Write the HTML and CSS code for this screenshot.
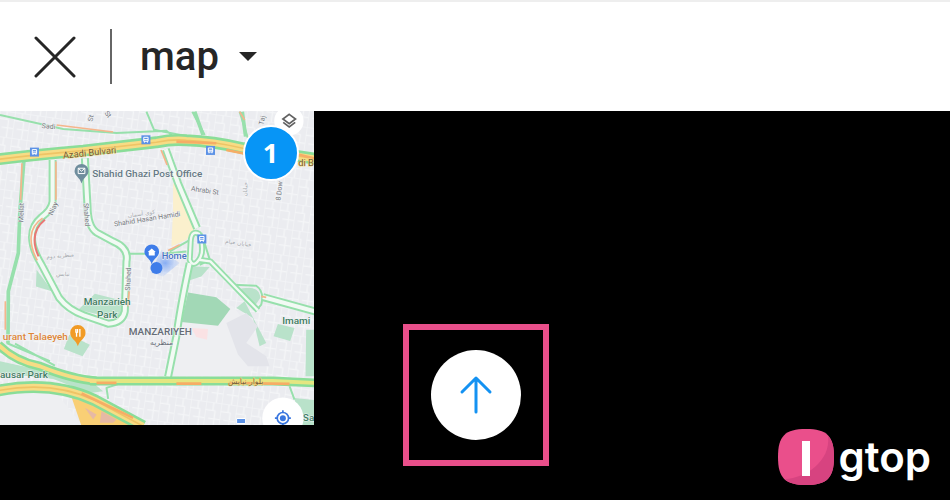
FILE: index.html
```html
<!DOCTYPE html>
<html lang="en">
<head>
    <meta charset="UTF-8">
    <meta name="viewport" content="width=device-width, initial-scale=1.0">
    <title>map</title>
    <link rel="stylesheet" href="styles.css">
</head>
<body>
    <header class="toolbar">
        <button type="button" class="close" aria-label="Close">
            <svg width="42" height="42" viewBox="0 0 42 42"><path d="M2 2L40 40M40 2L2 40"/></svg>
        </button>
        <span class="divider"></span>
        <label class="album">
            <select aria-label="Album">
                <option>map</option>
            </select>
            <svg class="caret" width="18" height="9" viewBox="0 0 18 9"><path d="M0 0H18L9 9Z"/></svg>
        </label>
    </header>

    <main class="gallery">
        <button type="button" class="photo" aria-label="Map screenshot, selected">
            <svg class="map" viewBox="0 3 942 942">
                <defs>
                    <pattern id="blocks" width="46" height="78" patternUnits="userSpaceOnUse" patternTransform="rotate(8)">
                        <path d="M0 0H46M0 25H30M12 50H46M0 0V78M23 0V25M30 25V78"/>
                    </pattern>
                    <radialGradient id="beam"><stop offset="0" stop-color="#5b91f3" stop-opacity=".7"/><stop offset="1" stop-color="#9dbcf8" stop-opacity=".2"/></radialGradient>
                    <path id="azadi" d="M-5 148Q110 134 250 122L470 97Q520 87 560 91Q640 94 730 115Q840 130 945 146"/>
                    <path id="niayesh" d="M270 814H820L945 820"/>
                    <path id="niayesh-west" d="M-5 705Q45 755 120 770Q220 810 290 814"/>
                    <path id="south" d="M-5 843C90 825 190 828 285 872L430 950"/>
                    <g id="roads">
                        <path d="M158 150V275Q155 300 125 322C80 360 92 410 125 465L178 565Q205 600 252 617L325 642Q368 640 375 605L380 455Q388 415 340 395L290 368Q264 350 263 290L255 145"/>
                        <path d="M498 118L535 220L592 355M570 460Q540 600 530 680L505 802"/>
                        <path d="M790 562L950 606"/>
                    </g>
                    <path id="diagonal" d="M598 450L632 455L700 525L775 602"/>
                    <path id="ring" d="M570 450L573 395Q575 360 598 372L605 395Q612 430 598 450Q580 475 570 450Z"/>
                </defs>

                <rect class="land" y="0" width="950" height="950"/>
                <rect fill="url(#blocks)" y="0" width="950" height="950"/>
                <path class="plain" d="M555 560L700 590L800 720L745 800H520ZM0 850L160 840L245 945H0Z"/>

                <!-- parks and districts -->
                <path class="sand" d="M520 220L560 250L590 350L560 390L515 410L520 300Z"/>
                <path class="park" d="M110 480L158 545L108 530ZM285 552L375 575L365 630L235 600ZM208 675L270 705L248 740L192 718ZM575 470L630 472L605 500L568 512ZM710 540Q780 520 782 565L765 590ZM710 595L735 575L800 700L780 710L760 625ZM835 643L885 655L872 694L822 680ZM920 660H950V800H918ZM0 755L70 770L280 820L310 845L270 850L160 808L0 790ZM885 865L950 872V950H900Z"/>
                <path class="park deep" d="M565 548L650 563L692 598L655 648L545 637Z"/>
                <path class="pink" d="M575 655L625 658L622 690L590 682Z"/>
                <path class="shade" d="M680 640L740 610L775 650L740 700L800 740L810 770H745L715 735Z"/>
                <path class="sand-road" d="M215 863L320 895L400 950H245Z"/>
                <path class="rose" d="M255 895L290 915L280 930ZM305 905L350 930L340 940H300Z"/>

                <!-- minor roads -->
                <path class="lane" d="M0 15L190 57L350 69L500 62L525 85M440 5L465 65M465 60L570 80M578 5L615 75M720 5L745 85M385 432H460M490 432L560 425M510 425L575 388M605 370L632 455M600 465L630 450M700 525L770 528Q795 545 785 585L772 600L705 532M20 700L150 755M45 702L165 768M325 868L320 835L380 815M870 830L885 870"/>
                <path class="lane wide" d="M72 150L60 300L55 430L25 545L24 700M585 5L610 75M728 5L738 80"/>
                <path class="jam" d="M170 45L340 66M66 160L62 270M16 575V660M720 5L735 30M505 422L540 405"/>

                <use href="#roads" class="edge"/>
                <use href="#diagonal" class="edge thin"/>
                <use href="#ring" class="edge thin"/>
                <use href="#roads" class="core"/>
                <use href="#diagonal" class="core thin"/>
                <use href="#ring" class="core thin"/>
                <path class="jam" d="M168 155V270M484 120L502 165M384 590L388 545M785 560L800 563"/>
                <path class="jam" d="M128 325C86 352 84 400 112 452"/>
                <path class="red" d="M135 330C97 360 98 400 116 440"/>

                <!-- highways -->
                <use href="#azadi" class="hwy-edge"/>
                <use href="#azadi" class="hwy-mid"/>
                <use href="#azadi" class="hwy-line"/>
                <path class="jam thick" d="M680 120L740 132M890 132L950 147M530 95L650 100"/>
                <use href="#niayesh" class="hwy-edge slim"/>
                <use href="#niayesh-west" class="hwy-edge slim"/>
                <use href="#niayesh" class="hwy-core slim"/>
                <use href="#niayesh-west" class="hwy-mid slim"/>
                <use href="#south" class="hwy-edge"/>
                <use href="#south" class="hwy-mid"/>
                <use href="#south" class="hwy-line"/>
                <path class="jam thick" d="M290 820H350M530 822H605M690 820L870 823M245 852L400 925"/>

                <!-- transit stops -->
                <g class="stop">
                    <g id="stop"><rect x="90" y="113" width="27" height="27"/><path d="M97 119H110V131H97ZM97 126H110M99 131V135M108 131V135"/></g>
                    <use href="#stop" x="335" y="-37"/>
                    <use href="#stop" x="529" y="-5"/>
                    <use href="#stop" x="503" y="261"/>
                    <path class="bus" d="M711 927H738V942H711Z"/>
                </g>

                <!-- street names -->
                <g class="street">
                    <text x="125" y="54" transform="rotate(5 125 54)">Sadi</text>
                    <text x="70" y="337" transform="rotate(-88 70 337)">Mellat</text>
                    <text x="158" y="318" transform="rotate(-67 158 318)">Niay</text>
                    <text x="251" y="280" transform="rotate(86 251 280)">Shahed</text>
                    <text x="391" y="543" transform="rotate(-88 391 543)">Shahed</text>
                    <text x="278" y="35" transform="rotate(-80 278 35)">St</text>
                    <text x="313" y="10" transform="rotate(50 313 10)">St</text>
                    <text x="792" y="46" transform="rotate(-80 792 46)">Taj</text>
                    <text x="843" y="273" transform="rotate(-84 843 273)">8 Dow</text>
                    <text x="573" y="243" transform="rotate(8 573 243)">Ahrabi St</text>
                    <text x="344" y="350" transform="rotate(-9 344 350)">Shahid Hasan Hamidi</text>
                    <text class="faint" x="385" y="323" transform="rotate(-8 385 323)">کوی آسمان</text>
                    <text class="faint" x="140" y="447" transform="rotate(-5 140 447)">منظریه دوم</text>
                    <text class="faint" x="168" y="499">نیایش</text>
                    <text class="faint" x="676" y="400" transform="rotate(8 676 400)">خیابان خیام</text>
                    <text class="faint" x="741" y="260" transform="rotate(-86 741 260)">خیابان</text>
                </g>
                <text class="major" x="190" y="146" transform="rotate(-6 190 146)">Azadi Bulvari</text>
                <text class="major" x="896" y="167">di B</text>
                <text class="major arabic" x="685" y="824">بلوار نیایش</text>

                <!-- places -->
                <text class="place" x="277" y="202">Shahid Ghazi Post Office</text>
                <text class="place green" x="322" y="587" text-anchor="middle">Manzarieh</text>
                <text class="place green" x="322" y="625" text-anchor="middle">Park</text>
                <text class="place green" x="0" y="806">ausar Park</text>
                <text class="place green" x="848" y="644">Imami</text>
                <text class="place green" x="910" y="935">Sa</text>
                <text class="district" x="387" y="676">MANZARIYEH</text>
                <text class="district arabic" x="451" y="707">منظریه</text>
                <text class="place orange" x="204" y="690" text-anchor="end">urant Talaeyeh</text>

                <path class="pin slate" d="M245 221C240 201 224 199 224 183A21 21 0 0 1 266 183C266 199 250 201 245 221Z"/>
                <path class="glyph" d="M235 175H255V191H235ZL245 184L255 175"/>
                <path class="pin amber" d="M234 710C229 690 211 688 211 669A23 23 0 0 1 257 669C257 688 239 690 234 710Z"/>
                <path class="glyph bold" d="M228 658V669M233 658V669M228 668H233M230 668V681M240 658V681"/>

                <path fill="url(#beam)" d="M452 490L490 500L540 460L485 420Z"/>
                <path class="pin blue" d="M456 464C451 445 434 442 434 426A22 22 0 0 1 478 426C478 442 461 445 456 464Z"/>
                <path class="house" d="M444 427L456 416L468 427H465V437H447V427Z"/>
                <circle class="me" cx="470" cy="475" r="18"/>
                <text class="place home" x="486" y="447">Home</text>

                <!-- map controls -->
                <circle class="control" cx="868" cy="33" r="44"/>
                <path class="layers" d="M869 13L888 27L869 41L850 27ZM851 37L869 51L887 37"/>
                <circle class="control" cx="850" cy="926" r="62"/>
                <circle class="locate" cx="850" cy="926" r="17"/>
                <path class="locate" d="M850 902V909M850 943V950M826 926H833M867 926H874"/>
                <circle class="dot" cx="850" cy="926" r="9"/>
            </svg>
            <span class="count">1</span>
        </button>

        <div class="highlight">
            <button type="button" class="upload" aria-label="Upload">
                <svg width="34" height="40" viewBox="0 0 34 40"><path d="M17 37V3M3 17L17 3L31 17"/></svg>
            </button>
        </div>

        <a class="brand" href="#" aria-label="Igtop">
            <svg width="56" height="56" viewBox="0 0 56 56">
                <path class="tile" d="M28 0C49 0 56 7 56 28S49 56 28 56 0 49 0 28 7 0 28 0Z"/>
                <path class="tile-shade" d="M50 7C55 12 56 19 56 28C56 49 49 56 28 56C18 56 11 54 7 50C28 49 53 32 50 7Z"/>
                <rect class="bar" x="24" y="12" width="8" height="35"/>
            </svg>
            <span>gtop</span>
        </a>
    </main>
</body>
</html>
```
FILE: styles.css
```css
* {
    box-sizing: border-box;
}
body {
    display: flex;
    flex-direction: column;
    min-height: 100vh;
    margin: 0;
    background-color: #000;
    font-family: Roboto, Arial, sans-serif;
}
button {
    padding: 0;
    border: none;
    background: none;
    font-family: inherit;
    cursor: pointer;
}
svg {
    display: block;
}

.toolbar {
    display: flex;
    align-items: center;
    height: 111px;
    padding-left: 34px;
    border-top: 2px solid #eee;
    background-color: #fff;
}
.close path {
    fill: none;
    stroke: #262626;
    stroke-width: 3;
    stroke-linecap: round;
}
.divider {
    width: 2px;
    height: 55px;
    margin: 0 28px 0 34px;
    background-color: #666;
}
.album {
    display: flex;
    align-items: center;
    gap: 20px;
}
.album select {
    appearance: none;
    padding: 0;
    border: none;
    background: none;
    color: #262626;
    font: 500 40px/48px Roboto, Arial, sans-serif;
}
.caret {
    fill: #262626;
}

.gallery {
    position: relative;
    flex: 1;
    min-height: 389px;
}
.photo {
    position: relative;
    display: block;
    width: 33%;
    overflow: hidden;
}
.map {
    width: 100%;
    height: auto;
}
.count {
    position: absolute;
    top: 14px;
    right: 15px;
    width: 56px;
    height: 56px;
    border: 2px solid #fff;
    border-radius: 50%;
    background-color: #0795f6;
    color: #fff;
    font: 700 27px/52px "Open Sans", sans-serif;
    text-align: center;
}
.highlight {
    position: absolute;
    right: 0;
    bottom: 34px;
    left: 2px;
    display: flex;
    align-items: center;
    justify-content: center;
    width: 146px;
    height: 142px;
    margin: 0 auto;
    border: 6px solid #e94f8a;
}
.upload {
    display: flex;
    align-items: center;
    justify-content: center;
    width: 90px;
    height: 90px;
    border-radius: 50%;
    background-color: #fff;
}
.upload path {
    fill: none;
    stroke: #1492f2;
    stroke-width: 3;
    stroke-linecap: round;
    stroke-linejoin: round;
}
.brand {
    position: absolute;
    right: 19px;
    bottom: 15px;
    display: flex;
    align-items: center;
    gap: 5px;
    color: #fff;
    font: 600 42px/56px Inter, sans-serif;
    text-decoration: none;
}
.tile {
    fill: #ea4f8b;
}
.tile-shade {
    fill: #d74380;
}
.bar {
    fill: #fff;
}

/* map drawing */
.land {
    fill: #ebecf0;
}
.plain {
    fill: #eeeff2;
}
#blocks path {
    fill: none;
    stroke: #f4f5f7;
    stroke-width: 4;
}
.park {
    fill: #b9e2ca;
}
.park.deep {
    fill: #a2d8b6;
}
.sand {
    fill: #fbf0cd;
}
.sand-road {
    fill: #f9cf75;
}
.rose {
    fill: #e6b9a5;
}
.pink {
    fill: #fae2e4;
}
.shade {
    fill: #e3e4ea;
}
.lane,
.jam,
.red,
.edge,
.core,
.hwy-edge,
.hwy-mid,
.hwy-core,
.hwy-line {
    fill: none;
    stroke-linejoin: round;
}
.lane {
    stroke: #97e0ac;
    stroke-width: 6;
}
.lane.wide {
    stroke-width: 11;
}
.jam {
    stroke: #f5b58c;
    stroke-width: 5;
}
.jam.thick {
    stroke: #f6ad66;
    stroke-width: 8;
}
.red {
    stroke: #e97775;
    stroke-width: 6;
}
.edge {
    stroke: #97e0ac;
    stroke-width: 24;
}
.core {
    stroke: #f2faf4;
    stroke-width: 12;
}
.edge.thin {
    stroke-width: 18;
}
.core.thin {
    stroke-width: 7;
}
.hwy-edge {
    stroke: #8add98;
    stroke-width: 36;
}
.hwy-mid {
    stroke: #f7dc85;
    stroke-width: 20;
}
.hwy-line {
    stroke: #efc466;
    stroke-width: 5;
}
.hwy-core {
    stroke: #e4e681;
}
.hwy-edge.slim {
    stroke-width: 27;
}
.hwy-mid.slim,
.hwy-core.slim {
    stroke-width: 12;
}
.stop rect {
    fill: #5c92e6;
}
.stop path {
    fill: none;
    stroke: #fff;
    stroke-width: 3;
}
.stop .bus {
    fill: #5c92e6;
}
.map text {
    paint-order: stroke;
    stroke: #f3f4f6;
    stroke-width: 3;
}
.street {
    fill: #73777d;
    font-size: 21px;
}
.street .faint {
    fill: #a3a7ad;
    font: 17px "DejaVu Sans", sans-serif;
}
.major {
    fill: #735a38;
    font-size: 28px;
}
.map .major {
    stroke: #f7dc85;
}
.place {
    fill: #667985;
    font-size: 30px;
    font-weight: 500;
}
.place.green {
    fill: #407d61;
}
.place.orange {
    fill: #df8638;
}
.place.home {
    fill: #4773c4;
    font-size: 28px;
}
.district {
    fill: #656c76;
    font-size: 30px;
    font-weight: 500;
}
.district.arabic,
.major.arabic {
    font: 23px "DejaVu Sans", sans-serif;
}
.pin.slate {
    fill: #6f8d9d;
}
.pin.amber {
    fill: #f19b25;
}
.pin.blue,
.me {
    fill: #3f7de9;
}
.glyph {
    fill: none;
    stroke: #fff;
    stroke-width: 3;
}
.glyph.bold {
    stroke-width: 4;
}
.house,
.control {
    fill: #fff;
}
.layers {
    fill: none;
    stroke: #616161;
    stroke-width: 5;
}
.locate {
    fill: none;
    stroke: #3976df;
    stroke-width: 5;
}
.dot {
    fill: #3976df;
}
```
